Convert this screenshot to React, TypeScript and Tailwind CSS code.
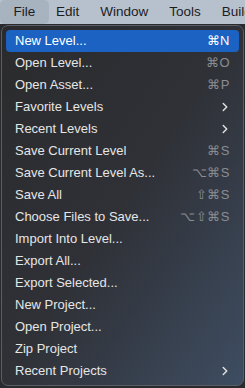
import { ChevronRight } from 'lucide-react';

type Item = { label: string; shortcut?: string; sub?: boolean; active?: boolean };

const items: Item[] = [
  { label: 'New Level...', shortcut: '⌘N', active: true },
  { label: 'Open Level...', shortcut: '⌘O' },
  { label: 'Open Asset...', shortcut: '⌘P' },
  { label: 'Favorite Levels', sub: true },
  { label: 'Recent Levels', sub: true },
  { label: 'Save Current Level', shortcut: '⌘S' },
  { label: 'Save Current Level As...', shortcut: '⌥⌘S' },
  { label: 'Save All', shortcut: '⇧⌘S' },
  { label: 'Choose Files to Save...', shortcut: '⌥⇧⌘S' },
  { label: 'Import Into Level...' },
  { label: 'Export All...' },
  { label: 'Export Selected...' },
  { label: 'New Project...' },
  { label: 'Open Project...' },
  { label: 'Zip Project' },
  { label: 'Recent Projects', sub: true },
];

const menus = ['Edit', 'Window', 'Tools', 'Build'];

export default function App() {
  return (
    <div
      className="w-[245px] h-[388px] overflow-hidden bg-[#2a2b2e] text-[13px]"
      style={{ fontFamily: '"Liberation Sans", Arial, sans-serif' }}
    >
      {/* menu bar */}
      <div className="h-[24px] flex items-center bg-[#b7c1cd] text-[#1c1d1f] text-[13.5px] whitespace-nowrap overflow-hidden">
        <div className="h-full w-[49px] shrink-0 flex items-center justify-center rounded-[5px] bg-[#a8b3c0]">File</div>
        <div className="flex gap-[21px] ml-[7px]">
          {menus.map((m) => (
            <span key={m}>{m}</span>
          ))}
        </div>
      </div>

      {/* dropdown */}
      <div className="mx-[1px] mt-[1px] h-[361px] rounded-[7px] border border-[#5a5d63] bg-gradient-to-br from-[#2b2b2d] via-[#2f3137] to-[#3e4d62] px-[4px] pt-[4px]">
        {items.map((it) => (
          <div
            key={it.label}
            className={`h-[22px] flex items-center justify-between pl-[9px] pr-[9px] rounded-[4px] ${it.active ? 'bg-[#1b62c2] text-white' : 'text-[#e6e6e6]'}`}
          >
            <span>{it.label}</span>
            {it.shortcut && (
              <span className={`tracking-[0.5px] ${it.active ? 'text-white' : 'text-[#8a8d93]'}`}>{it.shortcut}</span>
            )}
            {it.sub && <ChevronRight size={14} strokeWidth={2.5} className="text-[#e0e0e0] -mr-[2px]" />}
          </div>
        ))}
      </div>
    </div>
  );
}
